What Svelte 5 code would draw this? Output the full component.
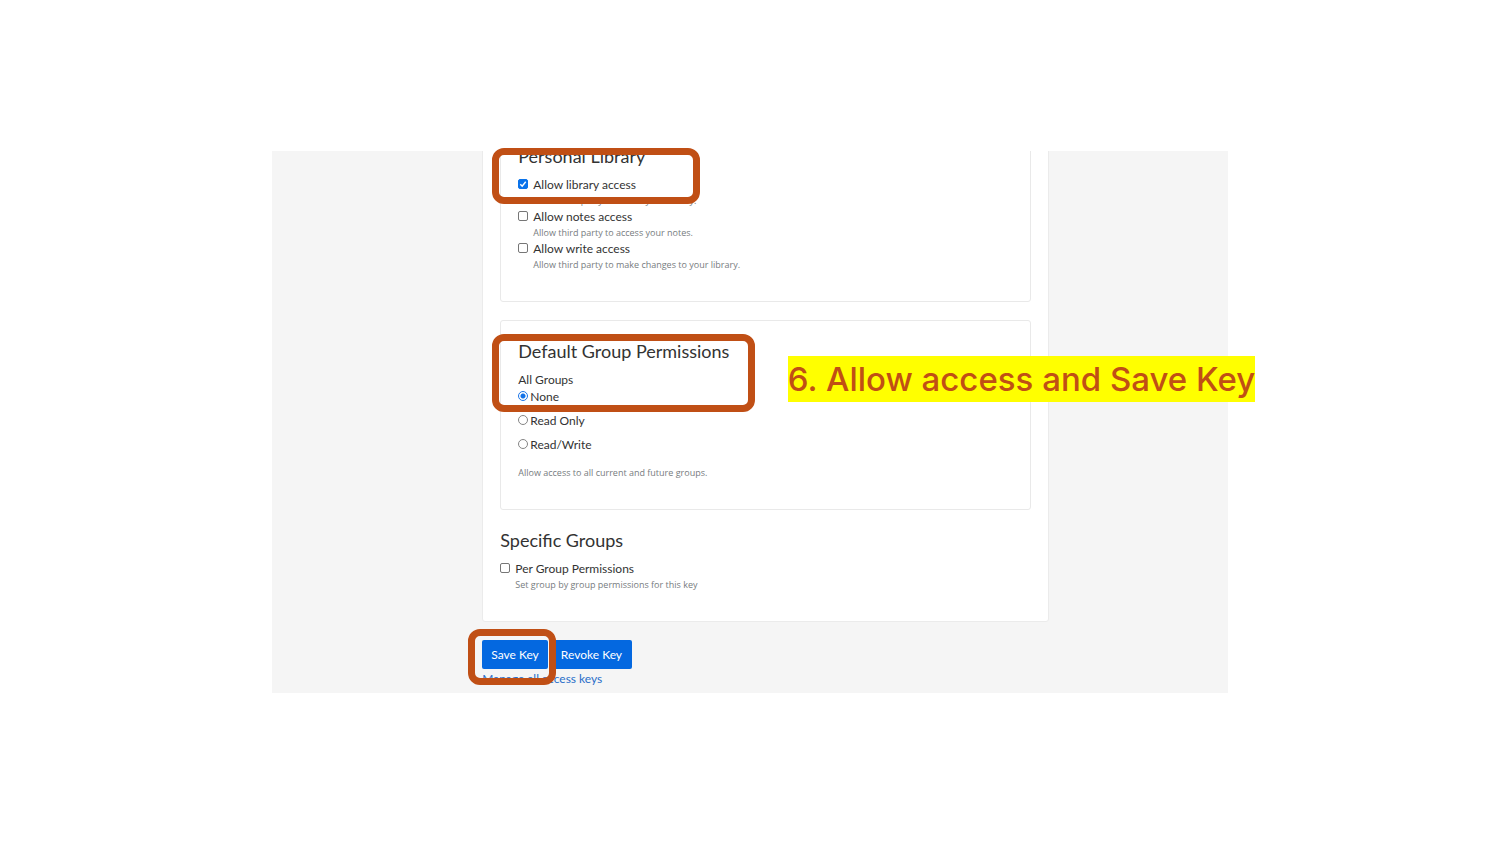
<script>
  let library = $state([
    { id: 'library', label: 'Allow library access', hint: 'Allow third party to access your library.', checked: true },
    { id: 'notes', label: 'Allow notes access', hint: 'Allow third party to access your notes.', checked: false },
    { id: 'write', label: 'Allow write access', hint: 'Allow third party to make changes to your library.', checked: false }
  ]);
  const levels = ['None', 'Read Only', 'Read/Write'];
  let level = $state('None');
  let perGroup = $state(false);
</script>

<main class="slide">
  <div class="shot">
    <div class="clip">
      <form class="page" onsubmit={(e) => e.preventDefault()}>
        <div class="card">
          <section class="box">
            <h2>Personal Library</h2>
            {#each library as item (item.id)}
              <div class="option">
                <input type="checkbox" id={item.id} bind:checked={item.checked} />
                <label for={item.id}>{item.label}</label>
              </div>
              <p class="hint indent">{item.hint}</p>
            {/each}
          </section>

          <section class="box">
            <h2>Default Group Permissions</h2>
            <div role="radiogroup" aria-labelledby="all-groups">
              <div id="all-groups">All Groups</div>
              <div class="radios">
                {#each levels as name, i}
                  <div class="option tight">
                    <input type="radio" id="level-{i}" name="level" value={name} bind:group={level} />
                    <label for="level-{i}">{name}</label>
                  </div>
                {/each}
              </div>
            </div>
            <p class="hint">Allow access to all current and future groups.</p>
          </section>

          <section class="specific">
            <h2>Specific Groups</h2>
            <div class="option">
              <input type="checkbox" id="per-group" bind:checked={perGroup} />
              <label for="per-group">Per Group Permissions</label>
            </div>
            <p class="hint indent">Set group by group permissions for this key</p>
          </section>
        </div>

        <div class="actions">
          <button type="submit">Save Key</button>
          <button type="button">Revoke Key</button>
        </div>
        <a href="#keys">Manage all access keys</a>
      </form>
    </div>

    <div class="callout library-mark"></div>
    <div class="callout group-mark"></div>
    <div class="callout save-mark"></div>
    <p class="note">6. Allow access and Save Key</p>
  </div>
</main>

<style>
  :global(body) {
    margin: 0;
    background: #fff;
  }
  .slide {
    min-height: 100vh;
    display: flex;
    align-items: center;
    justify-content: center;
    overflow: hidden;
    font: 12px/16px Lato, 'Open Sans', sans-serif;
    color: #333;
  }
  .shot {
    position: relative;
    width: 63.75%;
  }
  .clip {
    overflow: hidden;
    background: #f5f5f5;
  }
  .page {
    margin-top: -44px;
    padding: 0 18.75% 6px 22%;
  }
  .card {
    padding: 17px 17px 28px;
    border: 1px solid #ebebeb;
    border-radius: 3px;
    background: #fff;
  }
  .box {
    padding: 19px 17px 28px;
    border: 1px solid #e9e9e9;
    border-radius: 3px;
  }
  .box + .box {
    margin-top: 18px;
  }
  .specific {
    margin-top: 19px;
  }
  h2 {
    margin: 0 0 10px;
    font-size: 18px;
    line-height: 22px;
    font-weight: 400;
  }
  .option {
    display: flex;
    align-items: flex-start;
    gap: 5px;
    height: 16px;
  }
  .tight {
    gap: 2px;
  }
  .radios {
    display: grid;
    gap: 8px;
    margin: 1px 0 12px;
  }
  input {
    appearance: none;
    box-sizing: border-box;
    width: 10px;
    height: 10px;
    margin: 2px 0 0;
    border: 1px solid #767676;
    border-radius: 2px;
    background: #fff;
  }
  input[type='radio'] {
    border-color: #858585;
    border-radius: 50%;
  }
  input[type='checkbox']:checked {
    border-color: #0b73ea;
    background: #0b73ea url("data:image/svg+xml,%3Csvg xmlns='http://www.w3.org/2000/svg' viewBox='0 0 8 8'%3E%3Cpath d='M1.3 4.2 3.2 6.2 6.7 1.7' fill='none' stroke='white' stroke-width='1.4'/%3E%3C/svg%3E");
  }
  input[type='radio']:checked {
    border-color: #1a75e8;
    background: radial-gradient(circle, #1473e8 0 2px, #fff 3px);
  }
  .hint {
    margin: 0;
    font-family: 'Open Sans', sans-serif;
    font-size: 9px;
    color: #777c80;
  }
  .indent {
    padding-left: 15px;
  }
  .actions {
    display: flex;
    gap: 3px;
    margin-top: 18px;
  }
  button {
    height: 29px;
    padding: 0 9px;
    border: 0;
    border-radius: 2px;
    background: #0468e0;
    color: #fff;
    font: inherit;
  }
  button + button {
    padding: 0 10px;
  }
  a {
    display: block;
    margin-top: 2px;
    color: #2a6fc9;
    text-decoration: none;
  }
  .callout {
    position: absolute;
    box-sizing: border-box;
    border: 7px solid #c04f15;
    border-radius: 12px;
    pointer-events: none;
  }
  .library-mark {
    top: -3px;
    left: calc(22% + 10px);
    width: 208px;
    height: 56px;
  }
  .group-mark {
    top: 183px;
    left: calc(22% + 10px);
    width: 263px;
    height: 78px;
  }
  .save-mark {
    top: 478px;
    left: calc(22% - 14px);
    width: 88px;
    height: 56px;
  }
  .note {
    position: absolute;
    top: 205px;
    right: -27px;
    margin: 0;
    background: #ff0;
    color: #c04f15;
    font: 500 33px/46px Inter, sans-serif;
    white-space: nowrap;
  }
</style>
